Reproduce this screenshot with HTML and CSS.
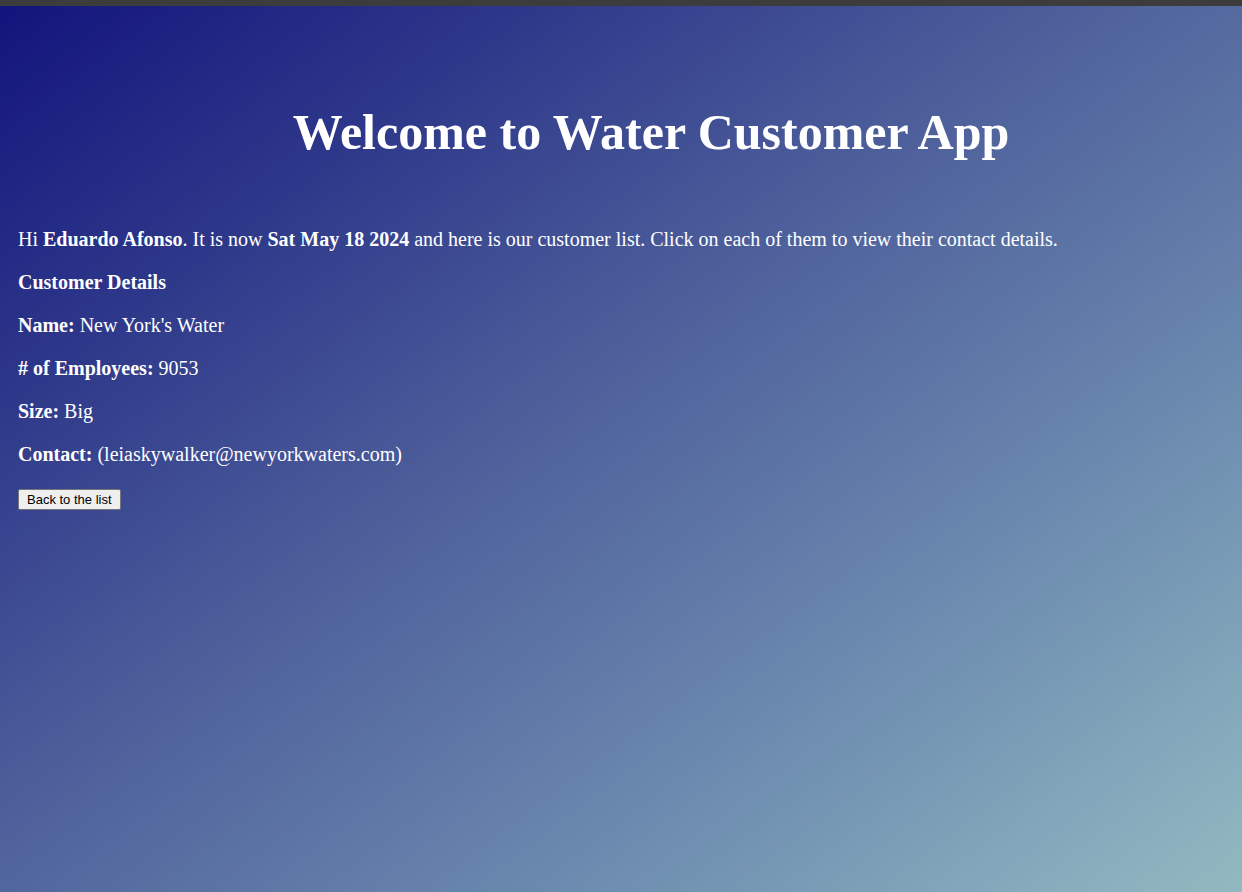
FILE: index.html
```html
<!DOCTYPE html>
<html lang="en">
<head>
<meta charset="utf-8">
<title>Water Customer App</title>
<link rel="stylesheet" href="styles.css">
</head>
<body>
<div class="topbar"></div>
<main class="app">
<h1 class="title">Welcome to Water Customer App</h1>
<p class="line">Hi <b>Eduardo Afonso</b>. It is now <b>Sat May 18 2024</b> and here is our customer list. Click on each of them to view their contact details.</p>
<p class="line"><b>Customer Details</b></p>
<p class="line"><b>Name:</b> New York's Water</p>
<p class="line"><b># of Employees:</b> 9053</p>
<p class="line"><b>Size:</b> Big</p>
<p class="line"><b>Contact:</b> (leiaskywalker@newyorkwaters.com)</p>
<button class="back" type="button">Back to the list</button>
</main>
</body>
</html>
```

FILE: styles.css
```css
* {
  box-sizing: border-box;
}

body {
  margin: 0;
  min-height: 100vh;
  display: flex;
  flex-direction: column;
  font-family: "Liberation Serif", "Times New Roman", serif;
  font-size: 20px;
  line-height: 23px;
  color: #fff;
}

.topbar {
  height: 6px;
  background: #3c3c3c;
}

.app {
  flex: 1;
  padding: 98px 18px 20px;
  background: linear-gradient(143deg, #13147c 0%, #2e388a 22%, #4e609b 45%, #6a88ae 70%, #8ab0be 94%, #92b9bf 100%);
}

.title {
  margin: 0 0 68px;
  padding-left: 60px;
  font-size: 50px;
  line-height: 56px;
  text-align: center;
}

.line {
  margin: 0 0 20px;
}

.back {
  display: block;
  height: 21px;
  margin-top: 23px;
  padding: 0 8px;
  border: 1px solid #767676;
  border-radius: 2px;
  background: #efefef;
  color: #000;
  font: 13px/19px "Liberation Sans", Arial, sans-serif;
}
```
